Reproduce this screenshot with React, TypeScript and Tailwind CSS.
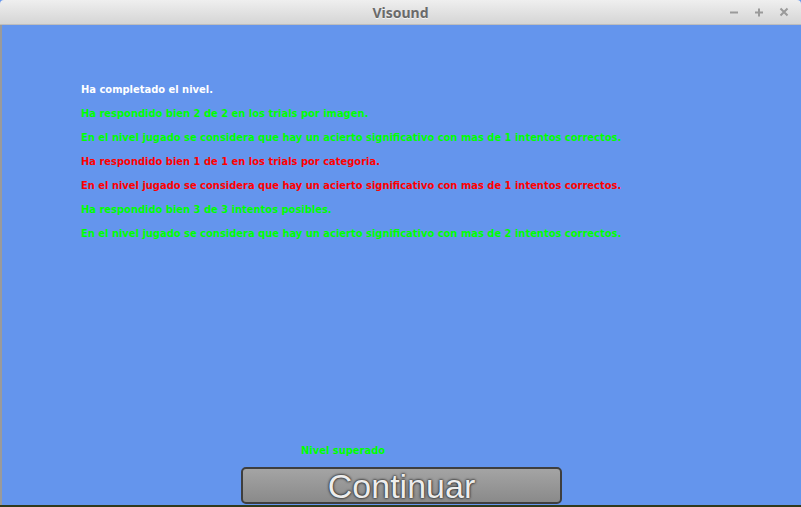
import React from "react";

const lines: { text: string; color: string }[] = [
    { text: "Ha completado el nivel.", color: "text-white" },
    { text: "Ha respondido bien 2 de 2 en los trials por imagen.", color: "text-[#00ff00]" },
    {
        text: "En el nivel jugado se considera que hay un acierto significativo con mas de 1 intentos correctos.",
        color: "text-[#00ff00]",
    },
    { text: "Ha respondido bien 1 de 1 en los trials por categoria.", color: "text-[#ff0000]" },
    {
        text: "En el nivel jugado se considera que hay un acierto significativo con mas de 1 intentos correctos.",
        color: "text-[#ff0000]",
    },
    { text: "Ha respondido bien 3 de 3 intentos posibles.", color: "text-[#00ff00]" },
    {
        text: "En el nivel jugado se considera que hay un acierto significativo con mas de 2 intentos correctos.",
        color: "text-[#00ff00]",
    },
];

function TitleBar() {
    return (
        <div className="relative flex h-[25px] items-center justify-center rounded-t-[4px] border-b border-[#bdbdbd] bg-gradient-to-b from-[#efefef] to-[#d5d5d5]">
            <span className="font-['Noto_Sans',sans-serif] text-[14px] font-bold text-[#6a6a6a] [text-shadow:0_1px_0_#f4f4f4]">
                Visound
            </span>
            <div className="absolute right-[12px] top-0 flex h-full items-center gap-[15px] text-[#9a9a9a]">
                <svg width="10" height="10" viewBox="0 0 10 10">
                    <path d="M1 5.5h8" stroke="currentColor" strokeWidth="2" />
                </svg>
                <svg width="10" height="10" viewBox="0 0 10 10">
                    <path d="M1 5.5h8M5 1.5v8" stroke="currentColor" strokeWidth="2" />
                </svg>
                <svg width="10" height="10" viewBox="0 0 10 10">
                    <path d="M1.5 1.5l7 7M8.5 1.5l-7 7" stroke="currentColor" strokeWidth="2" />
                </svg>
            </div>
        </div>
    );
}

export default function App() {
    return (
        <div className="flex h-[507px] w-[801px] flex-col overflow-hidden bg-[#6495ed]">
            <TitleBar />
            <div className="flex flex-1 flex-col border-l-2 border-[#9a9a9a] bg-[#6495ed]">
                <div className="flex flex-col pl-[79px] pt-[53px] font-['DejaVu_Sans',sans-serif] text-[9.93px] font-bold leading-[24px]">
                    {lines.map((l, i) => (
                        <div key={i} className={l.color}>
                            {l.text}
                        </div>
                    ))}
                </div>
                <div className="mt-auto flex flex-col">
                    <div className="pl-[299px] font-['DejaVu_Sans',sans-serif] text-[9.93px] font-bold leading-[14px] text-[#00ff00]">
                        Nivel superado
                    </div>
                    <button className="mb-[1px] ml-[239px] mt-[9px] flex h-[37px] w-[321px] items-center justify-center rounded-[5px] border-2 border-[#3e3e3e] bg-gradient-to-b from-[#a4a4a4] to-[#8a8a8a]">
                        <span className="font-['Liberation_Sans',sans-serif] text-[34px] leading-none text-[#ededed] [text-shadow:0_0_3px_#222,0_0_2px_#222]">
                            Continuar
                        </span>
                    </button>
                </div>
            </div>
            <div className="h-[2px] bg-[#2f3a1c]" />
        </div>
    );
}
